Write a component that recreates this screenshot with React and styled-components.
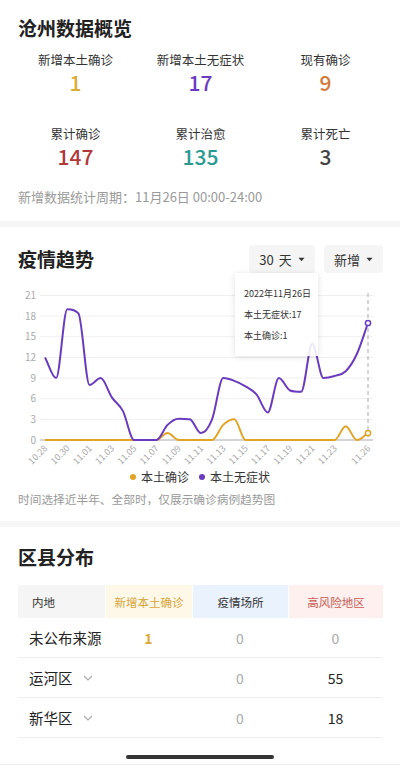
import React from 'react';
import styled, { createGlobalStyle } from 'styled-components';

const GlobalStyle = createGlobalStyle`
  html, body { margin: 0; padding: 0; background: #fff; }
  body {
    font-family: "Noto Sans CJK SC", "Noto Sans", sans-serif;
    color: #333;
  }
`;

const YELLOW = '#e0a526';
const PURPLE = '#6a3bbf';

const Page = styled.div`
  width: 400px;
  height: 765px;
  box-sizing: border-box;
  border-bottom: 1px solid #ececec;
  overflow: hidden;
  display: flex;
  flex-direction: column;
`;

const Divider = styled.div`
  height: 6px;
  flex: none;
  background: #f6f6f6;
`;

const SectionTitle = styled.h2`
  margin: 0;
  font-size: 19px;
  line-height: ${p => p.$lh || 26}px;
  font-weight: 700;
  color: #222;
`;

/* ---------- overview ---------- */
const Overview = styled.section`
  padding: 15px 0;
  & > ${SectionTitle} { margin: 0 18px; }
`;

const StatGrid = styled.div`
  margin: 10px 12px 0 13px;
  display: grid;
  grid-template-columns: repeat(3, 125px);
  row-gap: 30px;
`;

const Stat = styled.div`
  display: flex;
  flex-direction: column;
  align-items: center;
`;

const StatLabel = styled.div`
  font-size: 12.5px;
  line-height: 18px;
  color: #333;
`;

const StatValue = styled.div`
  font-size: 21px;
  line-height: 26px;
  font-weight: 500;
  color: ${p => p.$color};
`;

const Note = styled.div`
  margin: ${p => p.$m || '0 18px'};
  font-size: ${p => p.$size || 13}px;
  line-height: 18px;
  color: #9a9a9a;
`;

/* ---------- trend ---------- */
const Trend = styled.section`
  padding: 18px 0 13px;
`;

const TrendHead = styled.div`
  display: flex;
  align-items: center;
  justify-content: space-between;
  height: 28px;
  padding: 0 17px 0 18px;
`;

const Selects = styled.div`
  display: flex;
  gap: 9px;
`;

const Select = styled.div`
  width: ${p => p.$w}px;
  height: 28px;
  box-sizing: border-box;
  border-radius: 4px;
  background: #f5f5f5;
  display: flex;
  align-items: center;
  justify-content: center;
  gap: 6px;
  font-size: 13px;
  color: #333;
  word-spacing: 2px;
`;

const ChartBox = styled.div`
  position: relative;
  height: 195px;
`;

const Tooltip = styled.div`
  position: absolute;
  left: 235px;
  top: 0;
  width: 83px;
  box-sizing: border-box;
  padding: 10px 0 10px 9px;
  background: rgba(255, 255, 255, 0.88);
  box-shadow: 0 1px 6px rgba(0, 0, 0, 0.12);
  font-size: 9px;
  line-height: 21px;
  color: #333;
  white-space: nowrap;
`;

const Legend = styled.div`
  display: flex;
  justify-content: center;
  align-items: center;
  gap: 10px;
  height: 18px;
`;

const LegendItem = styled.div`
  display: flex;
  align-items: center;
  gap: 5px;
  font-size: 12px;
  line-height: 18px;
  color: #333;
  &::before {
    content: '';
    width: 6px;
    height: 6px;
    border-radius: 50%;
    background: ${p => p.$color};
  }
`;

/* ---------- districts ---------- */
const District = styled.section`
  padding-top: 17px;
  flex: 1;
  display: flex;
  flex-direction: column;
  & > ${SectionTitle} { margin: 0 18px; }
`;

const Table = styled.div`
  margin: 15px 17px 0 18px;
`;

const Row = styled.div`
  display: grid;
  grid-template-columns: 87px 87px 96px 95px;
  height: ${p => (p.$head ? 33 : 40)}px;
  box-sizing: border-box;
  border-bottom: ${p => (p.$head ? 'none' : '1px solid #eeeeee')};
`;

const HeadCell = styled.div`
  display: flex;
  align-items: center;
  justify-content: ${p => (p.$left ? 'flex-start' : 'center')};
  padding-left: ${p => (p.$left ? 14 : 0)}px;
  background: ${p => p.$bg};
  color: ${p => p.$color || '#333'};
  font-size: 11.5px;
  & + & { border-left: 1px solid #fff; }
`;

const NameCell = styled.div`
  display: flex;
  align-items: center;
  padding-left: 11px;
  font-size: 14.5px;
  color: #222;
  gap: 10px;
`;

const NumCell = styled.div`
  display: flex;
  align-items: center;
  justify-content: center;
  font-size: 14px;
  color: ${p => p.$color || '#aaa'};
  font-weight: ${p => (p.$bold ? 700 : 400)};
`;

const HomeBar = styled.div`
  margin: auto auto 5px;
  width: 148px;
  height: 4px;
  border-radius: 2px;
  background: #333;
`;

/* ---------- chart ---------- */
const purple = [12, 9, 19, 18.4, 8, 9, 6.2, 4.2, 0, 0, 0, 2.2, 3.1, 3, 1, 3, 9, 8.6, 7.8, 6.6, 4, 9, 7.2, 7, 14, 9, 9.3, 10, 12.5, 17];
const yellow = [0, 0, 0, 0, 0, 0, 0, 0, 0, 0, 0, 1, 0, 0, 0, 0, 2.2, 3, 0, 0, 0, 0, 0, 0, 0, 0, 0, 2, 0, 1];

const X0 = 45;
const STEP = (368 - 45) / 29;
const BASE = 167;
const UNIT = 144.5 / 21;
const px = i => X0 + i * STEP;
const py = v => BASE - v * UNIT;

const dayLabel = i => {
  if (i < 4) return `10.${28 + i}`;
  const d = i - 3;
  return `11.${d < 10 ? '0' + d : d}`;
};

// monotone cubic so the line never dips under zero
function smoothPath(vals) {
  const pts = vals.map((v, i) => [px(i), py(v)]);
  const n = pts.length;
  const m = [];
  for (let i = 0; i < n - 1; i++) m[i] = (pts[i + 1][1] - pts[i][1]) / (pts[i + 1][0] - pts[i][0]);
  const t = [m[0]];
  for (let i = 1; i < n - 1; i++) t[i] = m[i - 1] * m[i] <= 0 ? 0 : (m[i - 1] + m[i]) / 2;
  t[n - 1] = m[n - 2];
  for (let i = 0; i < n - 1; i++) {
    if (m[i] === 0) { t[i] = 0; t[i + 1] = 0; continue; }
    const a = t[i] / m[i];
    const b = t[i + 1] / m[i];
    const s = a * a + b * b;
    if (s > 9) {
      const k = 3 / Math.sqrt(s);
      t[i] = k * a * m[i];
      t[i + 1] = k * b * m[i];
    }
  }
  let d = `M${pts[0][0]},${pts[0][1]}`;
  for (let i = 0; i < n - 1; i++) {
    const h = (pts[i + 1][0] - pts[i][0]) / 3;
    d += ` C${pts[i][0] + h},${pts[i][1] + t[i] * h} ${pts[i + 1][0] - h},${pts[i + 1][1] - t[i + 1] * h} ${pts[i + 1][0]},${pts[i + 1][1]}`;
  }
  return d;
}

const labelIdx = [0, 2, 4, 6, 8, 10, 12, 14, 16, 18, 20, 22, 24, 26, 29];

function TrendChart() {
  return (
    <svg width="400" height="195" style={{ display: 'block' }}>
      {[3, 6, 9, 12, 15, 18, 21].map(v => (
        <line key={v} x1="40" x2="373" y1={py(v)} y2={py(v)} stroke="#efefef" strokeWidth="1" />
      ))}
      <line x1="40" x2="373" y1={BASE} y2={BASE} stroke="#aaa" strokeWidth="1" />
      {[0, 3, 6, 9, 12, 15, 18, 21].map(v => (
        <text key={v} x="36" y={py(v) + 3.5} textAnchor="end" fontSize="10" fill="#aaa">{v}</text>
      ))}
      {labelIdx.map(i => (
        <text
          key={i}
          transform={`translate(${px(i) + 3},${BASE + 9}) rotate(-45)`}
          textAnchor="end"
          fontSize="9"
          fill="#aaa"
        >
          {dayLabel(i)}
        </text>
      ))}
      <line x1={px(29)} x2={px(29)} y1="20" y2={BASE} stroke="#aaa" strokeWidth="1" strokeDasharray="4 3" />
      <path d={smoothPath(yellow)} fill="none" stroke={YELLOW} strokeWidth="2" />
      <path d={smoothPath(purple)} fill="none" stroke={PURPLE} strokeWidth="2" />
      <circle cx={px(29)} cy={py(17)} r="2.6" fill="#fff" stroke={PURPLE} strokeWidth="1.5" />
      <circle cx={px(29)} cy={py(1)} r="2.6" fill="#fff" stroke={YELLOW} strokeWidth="1.5" />
    </svg>
  );
}

const Caret = () => (
  <svg width="7" height="5" viewBox="0 0 7 5">
    <path d="M0.5 0.8 H6.5 L3.5 4.3 Z" fill="#333" />
  </svg>
);

const Chevron = () => (
  <svg width="10" height="6" viewBox="0 0 10 6">
    <polyline points="1,1 5,5 9,1" fill="none" stroke="#aaa" strokeWidth="1.1" />
  </svg>
);

const stats = [
  { label: '新增本土确诊', value: 1, color: '#dcab35' },
  { label: '新增本土无症状', value: 17, color: '#6a3bc2' },
  { label: '现有确诊', value: 9, color: '#d27a3a' },
  { label: '累计确诊', value: 147, color: '#b03a3a' },
  { label: '累计治愈', value: 135, color: '#2a9a92' },
  { label: '累计死亡', value: 3, color: '#444' },
];

const rows = [
  { name: '未公布来源', local: '1', place: '0', risk: '0', riskDark: false },
  { name: '运河区', arrow: true, local: '', place: '0', risk: '55', riskDark: true },
  { name: '新华区', arrow: true, local: '', place: '0', risk: '18', riskDark: true },
];

export default function App() {
  return (
    <Page>
      <GlobalStyle />
      <Overview>
        <SectionTitle>沧州数据概览</SectionTitle>
        <StatGrid>
          {stats.map(s => (
            <Stat key={s.label}>
              <StatLabel>{s.label}</StatLabel>
              <StatValue $color={s.color}>{s.value}</StatValue>
            </Stat>
          ))}
        </StatGrid>
        <Note $m="19px 18px 0">新增数据统计周期：11月26日 00:00-24:00</Note>
      </Overview>
      <Divider />
      <Trend>
        <TrendHead>
          <SectionTitle $lh={28}>疫情趋势</SectionTitle>
          <Selects>
            <Select $w={66}>30 天 <Caret /></Select>
            <Select $w={59}>新增 <Caret /></Select>
          </Selects>
        </TrendHead>
        <ChartBox>
          <TrendChart />
          <Tooltip>
            <div>2022年11月26日</div>
            <div>本土无症状:17</div>
            <div>本土确诊:1</div>
          </Tooltip>
        </ChartBox>
        <Legend>
          <LegendItem $color={YELLOW}>本土确诊</LegendItem>
          <LegendItem $color={PURPLE}>本土无症状</LegendItem>
        </Legend>
        <Note $m="4px 18px 0" $size={11.7}>时间选择近半年、全部时，仅展示确诊病例趋势图</Note>
      </Trend>
      <Divider />
      <District>
        <SectionTitle>区县分布</SectionTitle>
        <Table>
          <Row $head>
            <HeadCell $left $bg="#f5f5f5">内地</HeadCell>
            <HeadCell $bg="#fdf8e8" $color="#d6a53a">新增本土确诊</HeadCell>
            <HeadCell $bg="#eaf2fd">疫情场所</HeadCell>
            <HeadCell $bg="#fdf0ef" $color="#c65a52">高风险地区</HeadCell>
          </Row>
          {rows.map(r => (
            <Row key={r.name}>
              <NameCell>{r.name}{r.arrow && <Chevron />}</NameCell>
              <NumCell $color="#dcab35" $bold>{r.local}</NumCell>
              <NumCell>{r.place}</NumCell>
              <NumCell $color={r.riskDark ? '#222' : '#aaa'}>{r.risk}</NumCell>
            </Row>
          ))}
        </Table>
        <HomeBar />
      </District>
    </Page>
  );
}
